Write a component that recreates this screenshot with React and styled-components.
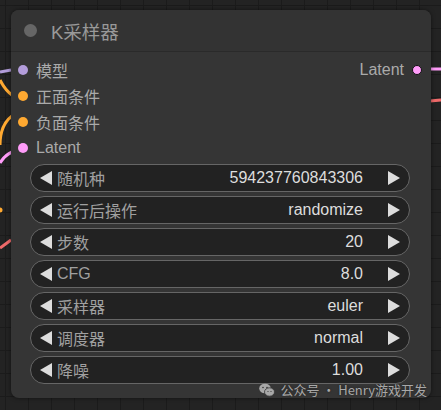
import React from 'react'
import styled, { createGlobalStyle } from 'styled-components'

const Global = createGlobalStyle`
    html, body { margin: 0; padding: 0; }
    body {
        width: 441px;
        height: 410px;
        overflow: hidden;
        background-color: #222;
        font-family: "Liberation Sans", Arial, "Noto Sans CJK SC", sans-serif;
    }
`
const Canvas = styled.div`
    position: relative;
    width: 441px;
    height: 410px;
    overflow: hidden;
    background-color: #232323;
    background-image:
        linear-gradient(#1b1b1b 1px, transparent 1px),
        linear-gradient(90deg, #1b1b1b 1px, transparent 1px);
    background-size: 23px 23px;
    background-position: 5px 5px;
    padding: 10px 10px 0 11px;
    box-sizing: border-box;
`
const Wires = styled.svg`
    position: absolute;
    left: 0;
    top: 0;
`
const Node = styled.div`
    position: relative;
    width: 420px;
    height: 388px;
    background: #353535;
    border-radius: 8px;
    box-shadow: 0 0 4px rgba(0,0,0,0.5);
    display: flex;
    flex-direction: column;
`
const Title = styled.div`
    height: 41px;
    display: flex;
    align-items: center;
    gap: 14px;
    padding-left: 13px;
    background: #333;
    border-radius: 8px 8px 0 0;
    border-bottom: 1px solid #2a2a2a;
    color: #999;
    font-size: 18.5px;
`
const TitleDot = styled.span`
    width: 13px;
    height: 13px;
    border-radius: 50%;
    background: #666;
`
const Body = styled.div`
    display: flex;
    flex-direction: column;
    padding: 5px 0 0;
`
const Slots = styled.div`
    display: grid;
    grid-template-columns: 1fr auto;
    align-items: start;
`
const SlotCol = styled.div`
    display: flex;
    flex-direction: column;
`
const Slot = styled.div`
    height: 26px;
    display: flex;
    align-items: center;
    gap: 8px;
    color: #aaa;
    font-size: 16px;
    flex-direction: ${p => p.out ? 'row-reverse' : 'row'};
    padding: ${p => p.out ? '0 9px 0 0' : '0 0 0 7px'};
`
const Dot = styled.span`
    width: 10px;
    height: 10px;
    border-radius: 50%;
    background: ${p => p.color};
    box-sizing: border-box;
    border: ${p => p.out ? '1px solid #111' : 'none'};
`
const Widgets = styled.div`
    display: flex;
    flex-direction: column;
    gap: 4px;
    padding: 3px 21px 0 19px;
`
const Widget = styled.div`
    height: 28px;
    box-sizing: border-box;
    border: 1px solid #666;
    border-radius: 14px;
    background: #222;
    display: flex;
    align-items: center;
    padding: 0 9px 0 9px;
    font-size: 16px;
`
const Arrow = styled.span`
    width: 0;
    height: 0;
    border-top: 7px solid transparent;
    border-bottom: 7px solid transparent;
    ${p => p.right ? 'border-left: 12px solid #ddd;' : 'border-right: 12px solid #ddd;'}
`
const Label = styled.span`
    color: #a0a0a0;
    margin-left: 5px;
    flex: 1;
`
const Value = styled.span`
    color: #ddd;
    margin-right: 25px;
`
const Mark = styled.div`
    position: absolute;
    right: 14px;
    bottom: 11px;
    display: flex;
    align-items: center;
    gap: 5px;
    color: #a8a8a8;
    font-size: 13px;
    font-family: "Noto Sans CJK SC", sans-serif;
    text-shadow: 0 0 2px #222;
`

const inputs = [
    { name: '模型', color: '#b39ddb' },
    { name: '正面条件', color: '#ffa931' },
    { name: '负面条件', color: '#ffa931' },
    { name: 'Latent', color: '#ff9cf9' },
]
const widgets = [
    ['随机种', '594237760843306'],
    ['运行后操作', 'randomize'],
    ['步数', '20'],
    ['CFG', '8.0'],
    ['采样器', 'euler'],
    ['调度器', 'normal'],
    ['降噪', '1.00'],
]

function WeChat(){
    return (
        <svg width="16" height="14" viewBox="0 0 16 14">
            <ellipse cx="6" cy="5.5" rx="5.8" ry="4.8" fill="#a8a8a8" />
            <ellipse cx="10.5" cy="9" rx="5" ry="4.2" fill="#a8a8a8" stroke="#353535" strokeWidth="0.8" />
            <circle cx="4" cy="4.5" r="0.8" fill="#353535" />
            <circle cx="8" cy="4.5" r="0.8" fill="#353535" />
            <circle cx="9" cy="8.5" r="0.6" fill="#353535" />
            <circle cx="12" cy="8.5" r="0.6" fill="#353535" />
        </svg>
    )
}

export default function App(){
    return (
        <Canvas>
            <Global />
            <Wires width="441" height="410">
                <path d="M0 72 L11 70" stroke="#b39ddb" strokeWidth="3" fill="none" />
                <path d="M0 80 Q5 90 12 95" stroke="#ffa931" strokeWidth="3" fill="none" />
                <path d="M0 145 Q0 125 12 116" stroke="#ffa931" strokeWidth="3" fill="none" />
                <path d="M0 163 Q5 155 12 152" stroke="#ff9cf9" strokeWidth="3" fill="none" />
                <circle cx="0" cy="210" r="2.5" fill="#ffa931" />
                <path d="M0 248 L11 240" stroke="#f06a6a" strokeWidth="3" fill="none" />
                <path d="M430 69 L441 69" stroke="#ff9cf9" strokeWidth="3" fill="none" />
                <path d="M430 101 L441 100" stroke="#f06a6a" strokeWidth="3" fill="none" />
            </Wires>
            <Node>
                <Title><TitleDot />K采样器</Title>
                <Body>
                    <Slots>
                        <SlotCol>
                            {inputs.map(i =>
                                <Slot key={i.name}><Dot color={i.color} />{i.name}</Slot>)}
                        </SlotCol>
                        <SlotCol>
                            <Slot out><Dot out color="#ff9cf9" />Latent</Slot>
                        </SlotCol>
                    </Slots>
                    <Widgets>
                        {widgets.map(([l, v]) =>
                            <Widget key={l}>
                                <Arrow />
                                <Label>{l}</Label>
                                <Value>{v}</Value>
                                <Arrow right />
                            </Widget>)}
                    </Widgets>
                </Body>
            </Node>
            <Mark><WeChat />公众号 · Henry游戏开发</Mark>
        </Canvas>
    )
}
